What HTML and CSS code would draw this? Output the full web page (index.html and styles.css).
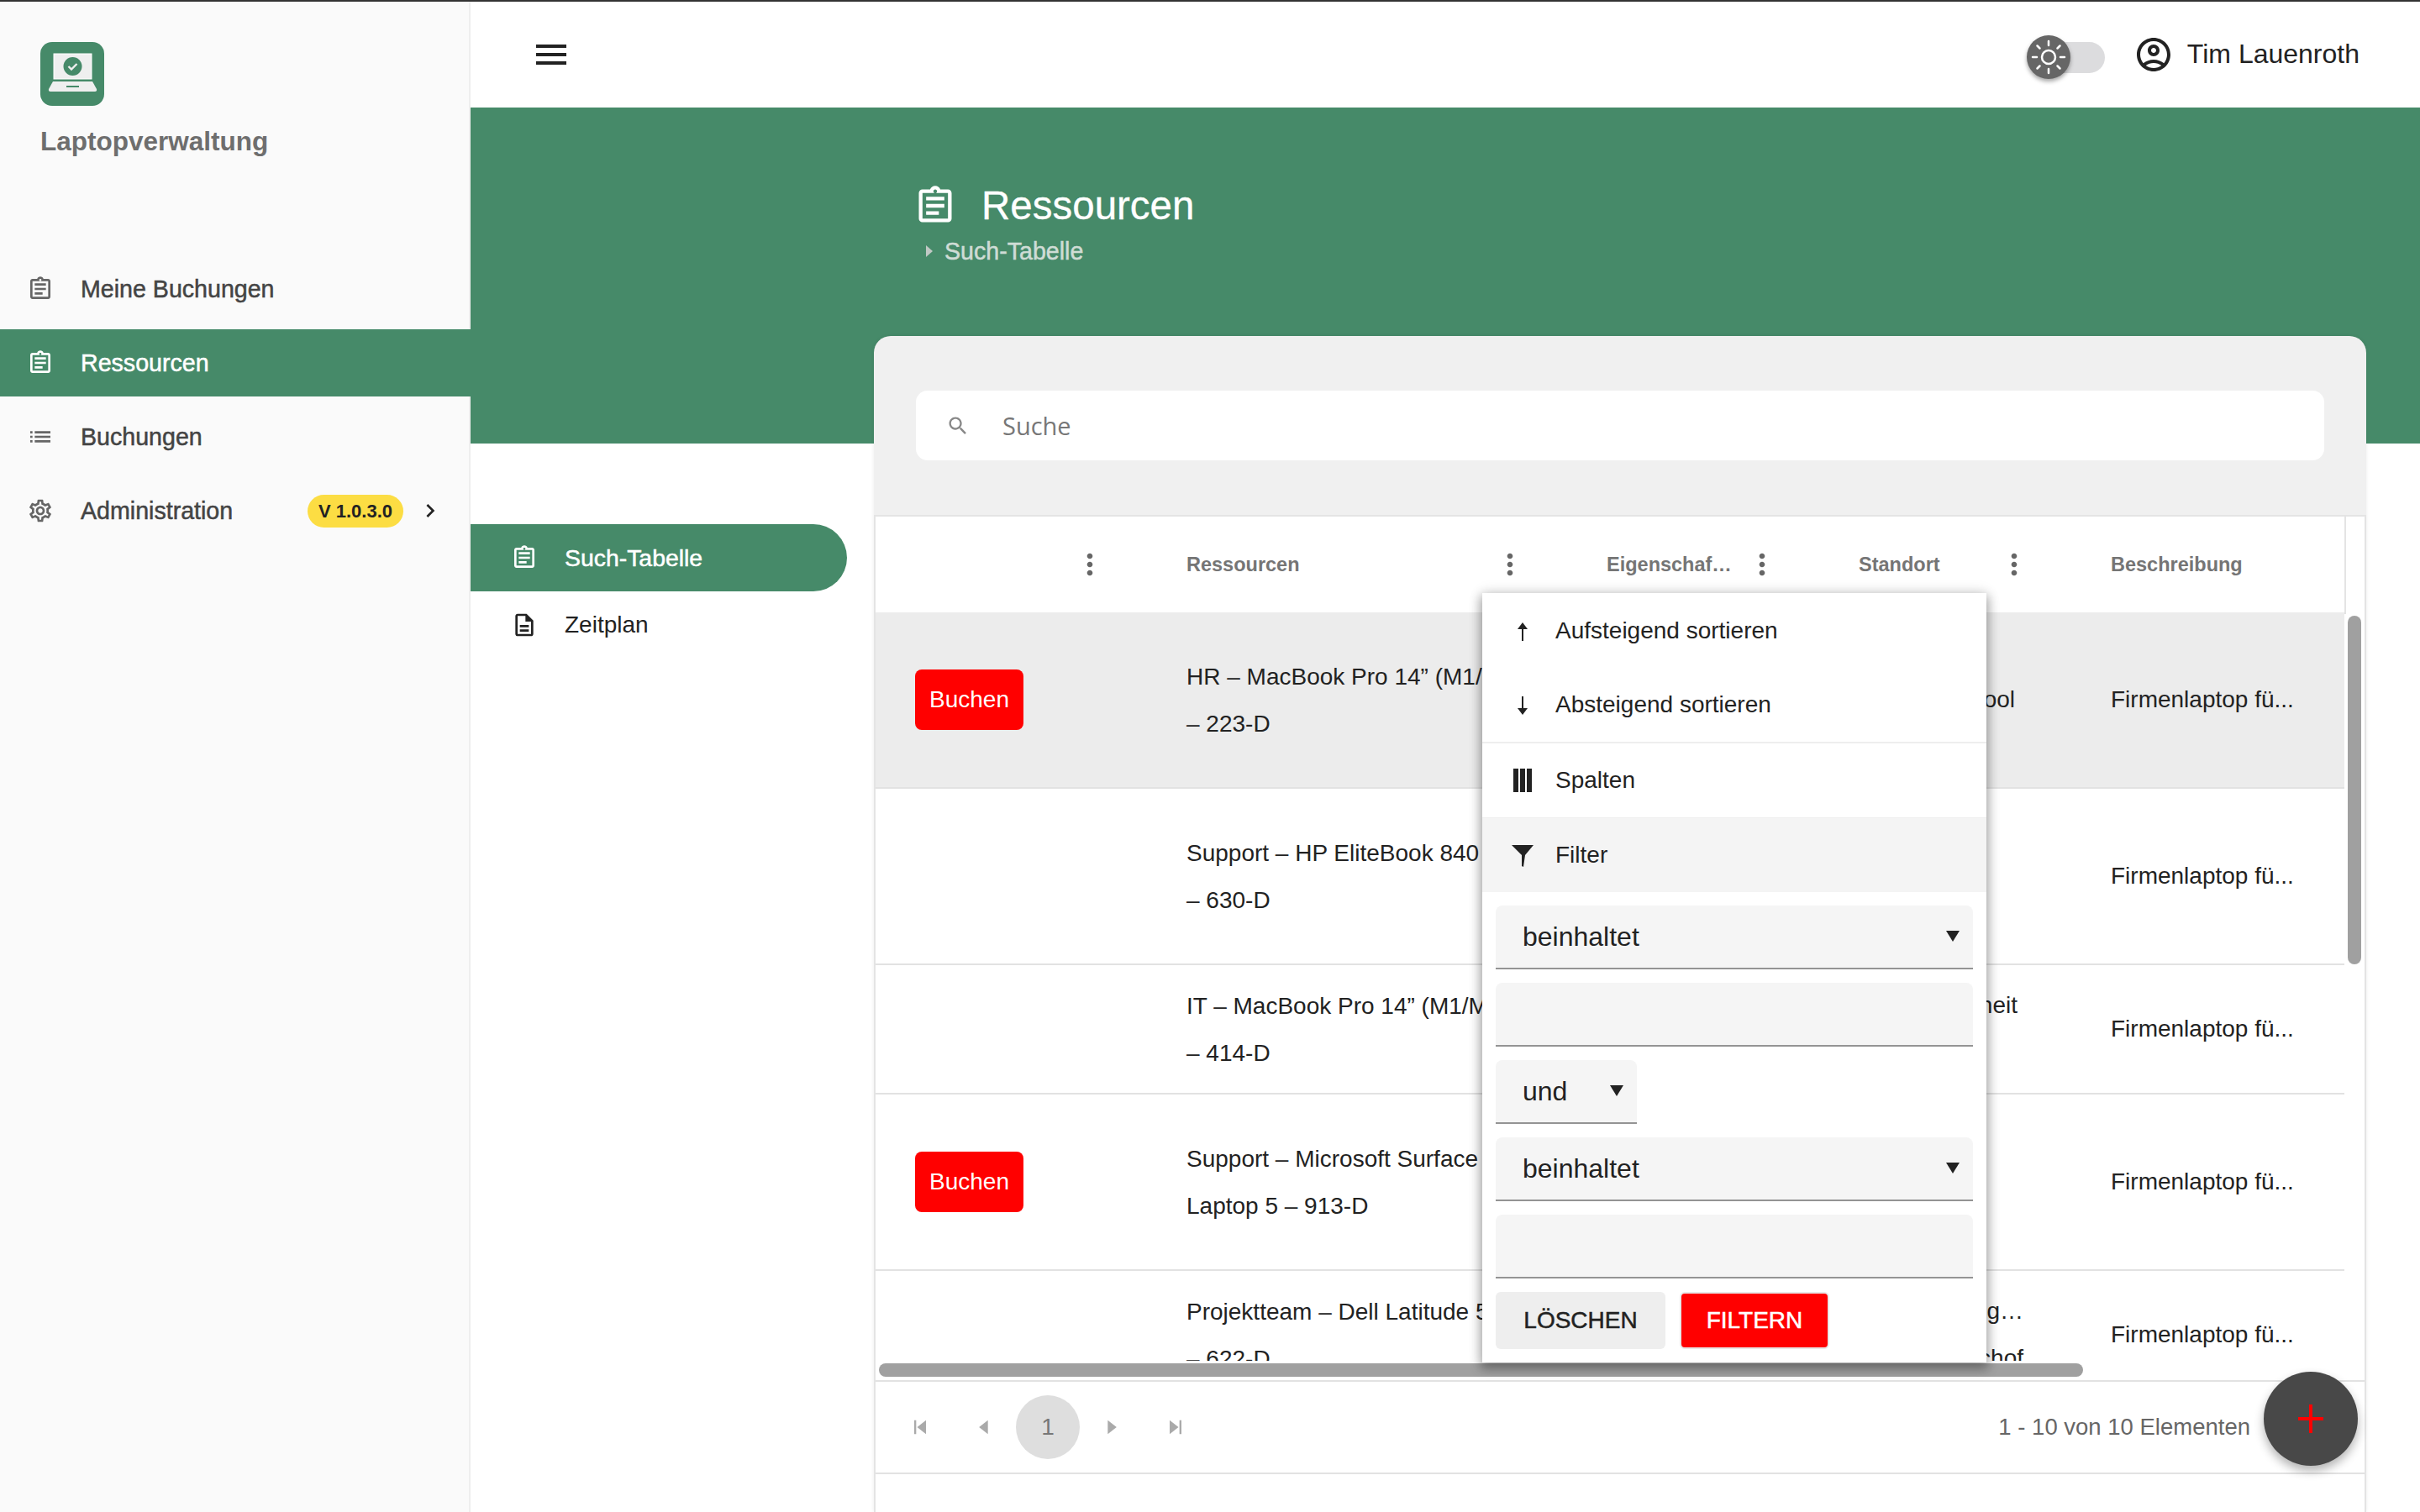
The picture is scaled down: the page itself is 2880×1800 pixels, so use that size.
FILE: index.html
```html
<!DOCTYPE html>
<html lang="de">
<head>
  <meta charset="utf-8">
  <title>Laptopverwaltung</title>
  <link rel="stylesheet" href="styles.css">
</head>
<body>
  <svg class="defs" width="0" height="0">
    <symbol id="i-clip" viewBox="0 0 24 24"><path d="M19 3h-4.18C14.4 1.84 13.3 1 12 1c-1.3 0-2.4.84-2.82 2H5c-1.1 0-2 .9-2 2v14c0 1.1.9 2 2 2h14c1.1 0 2-.9 2-2V5c0-1.1-.9-2-2-2zm-7 0c.55 0 1 .45 1 1s-.45 1-1 1-1-.45-1-1 .45-1 1-1zm7 16H5V5h14v14zM7 7h10v2H7zM7 11h10v2H7zM7 15h7v2H7z"/></symbol>
    <symbol id="i-dots" viewBox="0 0 24 24"><path d="M12 8c1.1 0 2-.9 2-2s-.9-2-2-2-2 .9-2 2 .9 2 2 2zm0 2c-1.100 0-2 .9-2 2s.9 2 2 2 2-.9 2-2-.9-2-2-2zm0 6c-1.100 0-2 .9-2 2s.9 2 2 2 2-.9 2-2-.9-2-2-2z"/></symbol>
  </svg>

  <aside class="sidebar">
    <div class="brand">
      <svg class="logo" viewBox="0 0 76 76">
        <rect width="76" height="76" rx="14" fill="#468a69"/>
        <rect x="16" y="14" width="45" height="30" fill="#efefef" stroke="#fff" stroke-width="1"/>
        <path d="M15 47h47l5 9c.6 2-.5 3-2 3H12c-1.500 0-2.600-1-2-3z" fill="#efefef"/>
        <rect x="31" y="52" width="15" height="2" fill="#468a69"/>
        <circle cx="38.500" cy="29" r="11" fill="#468a69"/>
        <path d="M33.500 29l3.500 3.500 6.500-6.500" fill="none" stroke="#efefef" stroke-width="2.400"/>
      </svg>
      <div class="brand-name">Laptopverwaltung</div>
    </div>
    <nav class="side-nav">
      <a class="side-item"><svg class="icon"><use href="#i-clip"/></svg>Meine Buchungen</a>
      <a class="side-item is-active"><svg class="icon"><use href="#i-clip"/></svg>Ressourcen</a>
      <a class="side-item"><svg class="icon" viewBox="0 0 24 24"><path d="M3 13h2v-2H3zm0 4h2v-2H3zm0-8h2V7H3zm4 4h14v-2H7zm0 4h14v-2H7zM7 7v2h14V7H7z"/></svg>Buchungen</a>
      <a class="side-item"><svg class="icon" viewBox="0 0 24 24"><path d="M19.430 12.980c.04-.32.07-.64.07-.98 0-.34-.03-.66-.07-.98l2.110-1.650c.19-.15.24-.42.12-.64l-2-3.460c-.09-.16-.26-.25-.44-.25-.06 0-.12.01-.17.03l-2.490 1c-.52-.4-1.080-.73-1.690-.98l-.38-2.650C14.460 2.180 14.250 2 14 2h-4c-.25 0-.46.18-.49.42l-.38 2.650c-.61.25-1.170.59-1.690.98l-2.490-1c-.06-.02-.12-.03-.18-.03-.17 0-.34.09-.43.25l-2 3.460c-.13.22-.07.49.12.64l2.110 1.650c-.04.32-.07.65-.07.98 0 .33.03.66.07.98l-2.110 1.650c-.19.15-.24.42-.12.64l2 3.460c.09.16.26.25.44.25.06 0 .12-.01.17-.03l2.490-1c.52.4 1.080.73 1.690.98l.38 2.650c.03.24.24.42.49.42h4c.25 0 .46-.18.49-.42l.38-2.650c.61-.25 1.170-.59 1.690-.98l2.490 1c.06.02.12.03.18.03.17 0 .34-.09.43-.25l2-3.460c.12-.22.07-.49-.12-.64l-2.110-1.650zm-1.980-1.710c.04.31.05.52.05.73 0 .21-.02.43-.05.73l-.14 1.130.89.7 1.080.84-.7 1.210-1.270-.51-1.040-.42-.9.68c-.43.32-.84.56-1.250.73l-1.060.43-.16 1.130-.2 1.350h-1.400l-.19-1.350-.16-1.130-1.060-.43c-.43-.18-.83-.41-1.230-.71l-.91-.7-1.060.43-1.270.51-.7-1.210 1.080-.84.89-.7-.14-1.130c-.03-.31-.05-.54-.05-.74s.02-.43.05-.73l.14-1.130-.89-.7-1.080-.84.7-1.210 1.270.51 1.040.42.9-.68c.43-.32.84-.56 1.250-.73l1.060-.43.16-1.130.2-1.350h1.390l.19 1.350.16 1.130 1.060.43c.43.18.83.41 1.230.71l.91.7 1.060-.43 1.270-.51.7 1.210-1.070.85-.89.7.14 1.130zM12 8c-2.210 0-4 1.790-4 4s1.790 4 4 4 4-1.790 4-4-1.790-4-4-4zm0 6c-1.100 0-2-.9-2-2s.9-2 2-2 2 .9 2 2-.9 2-2 2z"/></svg>Administration<span class="version">V 1.0.3.0</span><svg class="chevron" viewBox="0 0 24 24"><path d="M10 6L8.590 7.410 13.170 12l-4.580 4.590L10 18l6-6z"/></svg></a>
    </nav>
  </aside>

  <div class="main">
    <header class="topbar">
      <svg class="burger" viewBox="0 0 24 24"><path d="M3 18h18v-2H3v2zm0-5h18v-2H3v2zm0-7v2h18V6H3z"/></svg>
      <div class="toggle">
        <div class="toggle-track"></div>
        <div class="toggle-knob">
          <svg viewBox="0 0 52 52" width="52" height="52" fill="none" stroke="#fff" stroke-width="2.500" stroke-linecap="round">
            <circle cx="26" cy="26" r="8"/>
            <path d="M26 7v5M26 40v5M7 26h5M40 26h5M12.500 12.500l3 3M36.500 36.500l3 3M12.500 39.500l3-3M36.500 15.500l3-3"/>
          </svg>
        </div>
      </div>
      <svg class="user-icon" viewBox="0 0 24 24"><path d="M12 2C6.480 2 2 6.480 2 12s4.480 10 10 10 10-4.480 10-10S17.520 2 12 2zM7.350 18.500C8.660 17.560 10.260 17 12 17s3.340.56 4.650 1.500c-1.310.94-2.910 1.500-4.650 1.500s-3.340-.56-4.650-1.500zm10.790-1.380C16.450 15.800 14.320 15 12 15s-4.450.8-6.140 2.120C4.700 15.730 4 13.950 4 12c0-4.420 3.580-8 8-8s8 3.580 8 8c0 1.950-.7 3.730-1.860 5.120zM12 6c-1.930 0-3.500 1.570-3.500 3.500S10.070 13 12 13s3.500-1.570 3.500-3.500S13.930 6 12 6zm0 5c-.83 0-1.500-.67-1.500-1.500S11.170 8 12 8s1.500.67 1.500 1.500S12.830 11 12 11z"/></svg>
      <span class="user-name">Tim Lauenroth</span>
    </header>

    <section class="hero">
      <div class="hero-title"><svg class="hero-icon"><use href="#i-clip"/></svg><h1>Ressourcen</h1></div>
      <div class="crumb"><span class="crumb-arrow"></span>Such-Tabelle</div>
    </section>

    <div class="content">
      <nav class="sub-nav">
        <a class="sub-item is-active"><svg class="icon"><use href="#i-clip"/></svg>Such-Tabelle</a>
        <a class="sub-item"><svg class="icon" viewBox="0 0 24 24"><path d="M8 16h8v2H8zm0-4h8v2H8zm6-10H6c-1.100 0-2 .9-2 2v16c0 1.100.89 2 1.990 2H18c1.100 0 2-.9 2-2V8l-6-6zm4 18H6V4h7v5h5v11z"/></svg>Zeitplan</a>
      </nav>

      <section class="card">
        <div class="card-head">
          <div class="search">
            <svg class="search-icon" viewBox="0 0 24 24"><path d="M15.500 14h-.79l-.28-.27C15.410 12.590 16 11.110 16 9.500 16 5.910 13.090 3 9.500 3S3 5.910 3 9.500 5.910 16 9.500 16c1.610 0 3.090-.59 4.230-1.570l.27.28v.79l5 4.990L20.490 19l-4.990-5zm-6 0C7.010 14 5 11.990 5 9.500S7.010 5 9.500 5 14 7.010 14 9.500 11.990 14 9.500 14z"/></svg>
            <span class="search-text">Suche</span>
          </div>
        </div>

        <div class="table-wrap">
          <div class="table-head">
            <div class="th"><span></span><svg class="dots"><use href="#i-dots"/></svg></div>
            <div class="th"><span>Ressourcen</span><svg class="dots"><use href="#i-dots"/></svg></div>
            <div class="th"><span>Eigenschaf…</span><svg class="dots"><use href="#i-dots"/></svg></div>
            <div class="th"><span>Standort</span><svg class="dots"><use href="#i-dots"/></svg></div>
            <div class="th"><span>Beschreibung</span></div>
          </div>

          <div class="table-body">
            <div class="row row-tall is-selected">
              <div class="td"><button class="book">Buchen</button></div>
              <div class="td td-name">HR – MacBook Pro 14” (M1/M2)<br>– 223-D</div>
              <div class="td"></div>
              <div class="td td-place">Hardware-Pool</div>
              <div class="td td-desc">Firmenlaptop fü...</div>
            </div>
            <div class="row row-tall">
              <div class="td"></div>
              <div class="td td-name">Support – HP EliteBook 840 G9<br>– 630-D</div>
              <div class="td"></div>
              <div class="td td-place"></div>
              <div class="td td-desc">Firmenlaptop fü...</div>
            </div>
            <div class="row row-short">
              <div class="td"></div>
              <div class="td td-name">IT – MacBook Pro 14” (M1/M2)<br>– 414-D</div>
              <div class="td"></div>
              <div class="td td-place td-place-mid">Betriebseinheit<br>&nbsp;</div>
              <div class="td td-desc">Firmenlaptop fü...</div>
            </div>
            <div class="row row-tall">
              <div class="td"><button class="book">Buchen</button></div>
              <div class="td td-name">Support – Microsoft Surface<br>Laptop 5 – 913-D</div>
              <div class="td"></div>
              <div class="td td-place"></div>
              <div class="td td-desc">Firmenlaptop fü...</div>
            </div>
            <div class="row row-short">
              <div class="td"></div>
              <div class="td td-name">Projektteam – Dell Latitude 5440<br>– 622-D</div>
              <div class="td"></div>
              <div class="td td-place td-place-wide">Leipzig…<br>Bischof</div>
              <div class="td td-desc">Firmenlaptop fü...</div>
            </div>
          </div>

          <div class="hscroll"><div class="hscroll-thumb"></div></div>
          <div class="vscroll"></div>

          <footer class="pager">
            <svg class="page-btn" viewBox="0 0 24 24"><path d="M6 5h2v14H6zM18 5v14l-9-7z"/></svg>
            <svg class="page-btn" viewBox="0 0 24 24"><path d="M16 5v14l-9-7z"/></svg>
            <span class="page-current">1</span>
            <svg class="page-btn" viewBox="0 0 24 24"><path d="M8 5v14l9-7z"/></svg>
            <svg class="page-btn" viewBox="0 0 24 24"><path d="M16 5h2v14h-2zM6 5v14l9-7z"/></svg>
            <span class="page-info">1 - 10 von 10 Elementen</span>
          </footer>

          <div class="col-menu">
            <div class="menu-item"><svg class="menu-icon" viewBox="0 0 32 32"><path d="M16 6l-6 8h5v14h2V14h5z"/></svg>Aufsteigend sortieren</div>
            <div class="menu-item"><svg class="menu-icon" viewBox="0 0 32 32"><path d="M16 28l-6-8h5V6h2v14h5z"/></svg>Absteigend sortieren</div>
            <div class="menu-item has-rule"><svg class="menu-icon" viewBox="0 0 32 32"><path d="M5 2h6v28H5zM13 2h6v28h-6zM21 2h6v28h-6z"/></svg>Spalten</div>
            <div class="menu-item is-open"><svg class="menu-icon" viewBox="0 0 32 32"><path d="M3 4h26L19 16l-2 14-2-1V16z"/></svg>Filter</div>
            <form class="filter-form">
              <div class="field field-select">beinhaltet</div>
              <div class="field"></div>
              <div class="field field-select field-small">und</div>
              <div class="field field-select">beinhaltet</div>
              <div class="field"></div>
              <div class="filter-actions">
                <button type="button" class="btn-clear">LÖSCHEN</button>
                <button type="button" class="btn-apply">FILTERN</button>
              </div>
            </form>
          </div>
        </div>

        <button class="fab"><svg viewBox="0 0 30 34" width="30" height="34"><path d="M13 0h4v15h13v4H17v15h-4V19H0v-4h13z" fill="#ff0000"/></svg></button>
      </section>
    </div>
  </div>
</body>
</html>
```

FILE: styles.css
```css
* {
  box-sizing: border-box;
}
html, body {
  height: 100%;
}
body {
  margin: 0;
  height: 1800px;
  overflow: hidden;
  display: flex;
  border-top: 2px solid #333;
  background: #fff;
  color: #222;
  font-family: "Liberation Sans", Arial, sans-serif;
  font-size: 28px;
}
.defs {
  position: absolute;
}
.icon {
  width: 32px;
  height: 32px;
  flex: none;
  fill: currentColor;
}

/* sidebar */
.sidebar {
  width: 560px;
  flex: none;
  background: #fafafa;
  border-right: 2px solid #eee;
}
.brand {
  padding: 48px 0 0 48px;
  height: 302px;
}
.logo {
  display: block;
  width: 76px;
  height: 76px;
}
.brand-name {
  margin-top: 22px;
  font-size: 31.5px;
  line-height: 40px;
  font-weight: bold;
  color: #6e6e6e;
}
.side-nav {
  display: flex;
  flex-direction: column;
  gap: 8px;
}
.side-item {
  display: flex;
  align-items: center;
  gap: 32px;
  height: 80px;
  padding: 0 30px 0 32px;
  color: #444;
  font-size: 28.6px;
  white-space: nowrap;
  -webkit-text-stroke: 0.5px currentColor;
}
.side-item .icon {
  color: #666;
}
.side-item.is-active {
  margin-right: -2px;
  background: #468a69;
  color: #fff;
}
.side-item.is-active .icon {
  color: #fff;
}
.version {
  margin-left: auto;
  height: 39px;
  line-height: 39px;
  padding: 0 13px;
  border-radius: 20px;
  background: #fcdd43;
  color: #222;
  font-size: 22px;
  font-weight: bold;
  -webkit-text-stroke: 0;
}
.chevron {
  width: 32px;
  height: 32px;
  margin-left: -16px;
  fill: #222;
}

/* top */
.main {
  flex: 1;
  display: flex;
  flex-direction: column;
  min-width: 0;
}
.topbar {
  height: 126px;
  flex: none;
  display: flex;
  align-items: center;
  padding: 0 72px;
}
.burger {
  width: 48px;
  height: 48px;
  fill: #222;
}
.toggle {
  position: relative;
  width: 93px;
  height: 53px;
  margin: 7px 34px 0 auto;
}
.toggle-track {
  margin: 8px 0 0 15px;
  height: 37px;
  border-radius: 19px;
  background: #dcdcde;
}
.toggle-knob {
  position: absolute;
  left: 0;
  top: 0;
  width: 52px;
  height: 52px;
  border-radius: 50%;
  background: #666;
  box-shadow: 0 3px 5px rgba(0, 0, 0, .35);
}
.toggle-knob svg {
  display: block;
}
.user-icon {
  width: 48px;
  height: 48px;
  fill: #222;
}
.user-name {
  margin: 0 0 2px 16px;
  font-size: 32px;
}

.hero {
  height: 400px;
  flex: none;
  background: #468a69;
  color: #fff;
  padding: 90px 0 0 527px;
}
.hero-title {
  display: flex;
  align-items: center;
  gap: 29px;
}
.hero-icon {
  width: 52px;
  height: 52px;
  fill: #fff;
}
.hero-title h1 {
  margin: 0;
  font-size: 47.5px;
  line-height: 54px;
  font-weight: normal;
  -webkit-text-stroke: 0.3px currentColor;
}
.crumb {
  display: flex;
  align-items: center;
  margin-top: 10px;
  padding-left: 15px;
  gap: 14px;
  color: #cfdcd5;
  font-size: 28.6px;
  line-height: 34px;
  -webkit-text-stroke: 0.5px currentColor;
}
.crumb-arrow {
  border-left: 8px solid #c0c8c4;
  border-top: 7px solid transparent;
  border-bottom: 7px solid transparent;
}

/* content */
.content {
  display: flex;
  flex: 1;
  min-height: 0;
}
.sub-nav {
  width: 480px;
  flex: none;
  padding-top: 96px;
}
.sub-item {
  display: flex;
  align-items: center;
  gap: 32px;
  width: 448px;
  height: 80px;
  padding-left: 48px;
  color: #222;
}
.sub-item.is-active {
  background: #468a69;
  color: #fff;
  border-radius: 0 40px 40px 0;
  font-size: 28.4px;
  -webkit-text-stroke: 0.5px currentColor;
}

.card {
  position: relative;
  width: 1776px;
  height: 1400px;
  margin-top: -128px;
  display: flex;
  flex-direction: column;
  background: #f0f0f0;
  border-radius: 20px 20px 0 0;
  box-shadow: 0 0 4px rgba(0, 0, 0, .08);
}
.card-head {
  height: 213px;
  flex: none;
  padding: 65px 50px 0;
}
.search {
  display: flex;
  align-items: center;
  height: 83px;
  padding-left: 36px;
  background: #fff;
  border-radius: 14px;
}
.search-icon {
  width: 28px;
  height: 28px;
  fill: #888;
}
.search-text {
  margin-left: 39px;
  color: #777;
  font-family: "Open Sans", sans-serif;
  font-size: 29px;
}

.table-wrap {
  position: relative;
  flex: 1;
  background: #fff;
  border: 2px solid #e4e4e4;
  border-bottom: 0;
}
.table-head, .row {
  display: grid;
  width: 1748px;
  grid-template-columns: 346px 500px 300px 300px 302px;
}
.table-head {
  height: 114px;
  border-right: 2px solid #e4e4e4;
  box-sizing: content-box;
  border-bottom: 2px solid #e0e0e0;
  margin-bottom: -2px;
}
.th {
  display: flex;
  align-items: center;
  justify-content: space-between;
  padding: 0 71px 0 24px;
  color: #757575;
  font-size: 23.5px;
  font-weight: bold;
}
.dots {
  width: 40px;
  height: 40px;
  fill: #666;
  flex: none;
}
.table-body {
  height: 891px;
  overflow: hidden;
}
.row {
  align-items: center;
  border-bottom: 2px solid #e2e2e2;
}
.row-tall {
  height: 210px;
}
.row-short {
  height: 154px;
}
.row.is-selected {
  background: #ececec;
}
.td {
  padding: 0 0 0 24px;
  line-height: 56px;
  white-space: nowrap;
}
.td:first-child {
  padding-left: 47px;
}
.td-name {
  padding-top: 2px;
}
.td-place {
  padding: 0 90px 0 0;
  text-align: right;
}
.td-place-mid {
  padding-right: 87px;
}
.td-place-wide {
  padding-right: 80px;
}
.book {
  display: block;
  width: 129px;
  height: 72px;
  border: 0;
  border-radius: 8px;
  background: #ff0000;
  color: #fff;
  font: 28px "Liberation Sans", Arial, sans-serif;
}
.hscroll {
  height: 23px;
  padding: 3px 0 0 4px;
}
.hscroll-thumb {
  width: 1433px;
  height: 16px;
  border-radius: 8px;
  background: #a0a0a0;
}
.vscroll {
  position: absolute;
  left: 1752px;
  top: 118px;
  width: 16px;
  height: 415px;
  border-radius: 8px;
  background: #a0a0a0;
}

.pager {
  display: flex;
  align-items: center;
  height: 112px;
  padding: 0 136px 0 15px;
  border-top: 2px solid #e2e2e2;
  border-bottom: 2px solid #e2e2e2;
}
.page-btn {
  width: 76px;
  height: 28px;
  fill: #aaa;
}
.page-current {
  width: 76px;
  height: 76px;
  line-height: 76px;
  border-radius: 50%;
  background: #dedede;
  color: #777;
  text-align: center;
}
.page-info {
  margin-left: auto;
  color: #666;
  font-size: 27.5px;
}

/* column menu */
.col-menu {
  position: absolute;
  left: 722px;
  top: 91px;
  width: 600px;
  height: 916px;
  padding-top: 1px;
  background: #fff;
  box-shadow: 0 6px 12px 2px rgba(0, 0, 0, .3), 0 0 16px rgba(0, 0, 0, .14);
}
.menu-item {
  display: flex;
  align-items: center;
  height: 88px;
  padding-left: 32px;
  gap: 23px;
}
.menu-item.has-rule {
  height: 90px;
  border-top: 2px solid #eee;
}
.menu-item.is-open {
  height: 89px;
  background: #f4f4f4;
  border-top: 1px solid #eee;
}
.menu-icon {
  width: 32px;
  height: 32px;
  fill: #222;
}
.filter-form {
  display: flex;
  flex-direction: column;
  gap: 16px;
  padding: 16px;
}
.field {
  position: relative;
  height: 76px;
  line-height: 74px;
  padding-left: 32px;
  background: #f5f5f5;
  border-bottom: 2px solid #949494;
  border-radius: 8px 8px 0 0;
  font-size: 32px;
}
.field-select::after {
  content: "";
  position: absolute;
  right: 16px;
  top: 30px;
  border-top: 13px solid #222;
  border-left: 8px solid transparent;
  border-right: 8px solid transparent;
}
.field-small {
  width: 168px;
}
.filter-actions {
  display: flex;
  gap: 17px;
}
.btn-clear, .btn-apply {
  height: 68px;
  border: 0;
  border-radius: 6px;
  font: 28px "Liberation Sans", Arial, sans-serif;
  -webkit-text-stroke: 0.5px currentColor;
}
.btn-clear {
  width: 202px;
  background: #eee;
  color: #222;
}
.btn-apply {
  width: 178px;
  background: #ff0000;
  border: 2px solid #e8e8e8;
  color: #fff;
}

.fab {
  position: absolute;
  left: 1654px;
  top: 1233px;
  width: 112px;
  height: 112px;
  border: 0;
  border-radius: 50%;
  background: #484848;
  box-shadow: 0 6px 12px rgba(0, 0, 0, .3);
  display: flex;
  align-items: center;
  justify-content: center;
}
```
